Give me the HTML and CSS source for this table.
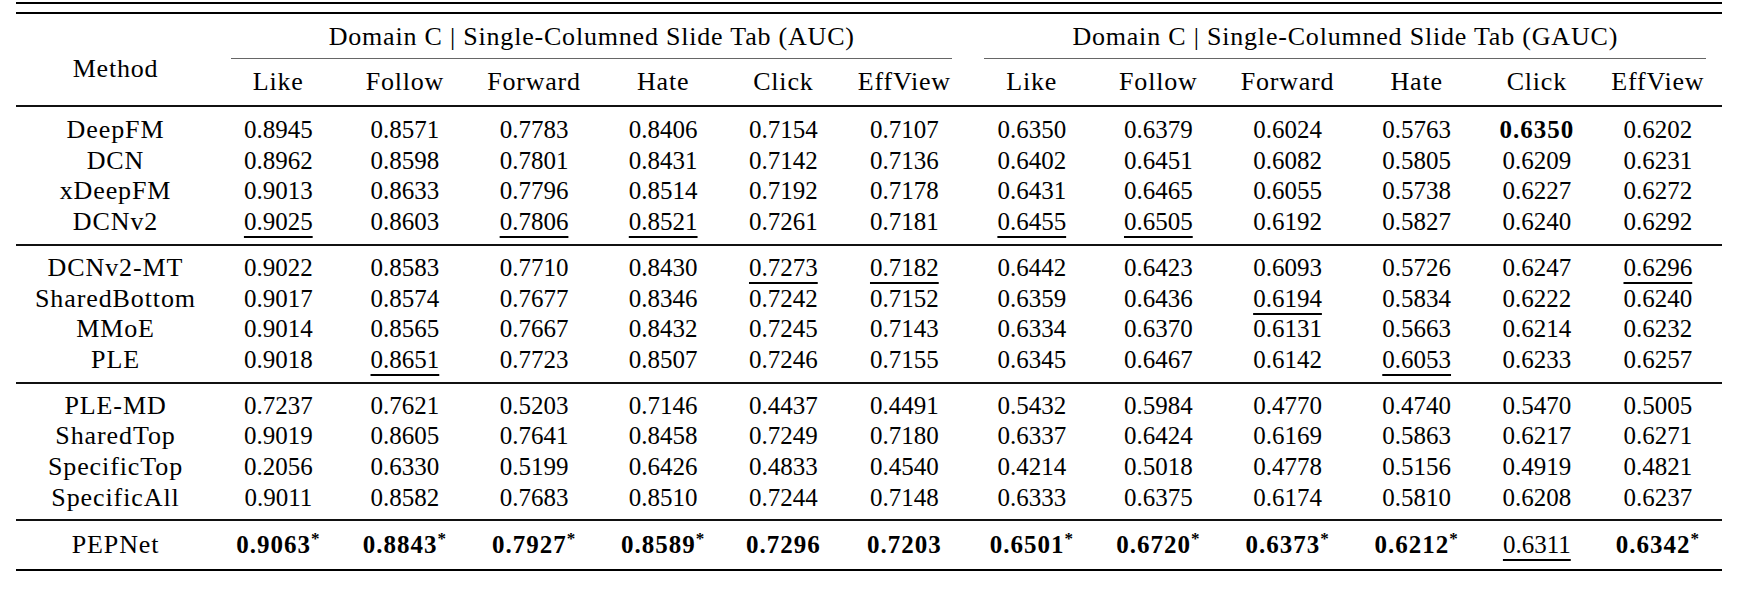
FILE: index.html
```html
<!DOCTYPE html>
<html>
<head>
<meta charset="utf-8">
<link rel="stylesheet" href="styles.css">
</head>
<body>
<div class="page">
  <div class="wrap">
    <div class="double"></div>
    <table class="results">
      <colgroup>
        <col class="c-method">
        <col class="c-n"><col class="c-n"><col class="c-w"><col class="c-n"><col class="c-s"><col class="c-e">
        <col class="c-n"><col class="c-n"><col class="c-w"><col class="c-n"><col class="c-s"><col class="c-e">
      </colgroup>
      <thead>
        <tr>
          <th class="method" rowspan="2">Method</th>
          <th class="group" colspan="6"><div class="gtitle">Domain C | Single-Columned Slide Tab (AUC)</div><div class="cmid"></div></th>
          <th class="group" colspan="6"><div class="gtitle">Domain C | Single-Columned Slide Tab (GAUC)</div><div class="cmid"></div></th>
        </tr>
        <tr class="subs">
          <th>Like</th><th>Follow</th><th>Forward</th><th>Hate</th><th>Click</th><th>EffView</th>
          <th>Like</th><th>Follow</th><th>Forward</th><th>Hate</th><th>Click</th><th>EffView</th>
        </tr>
      </thead>
      <tbody>
        <tr class="first">
          <td class="name">DeepFM</td>
          <td>0.8945</td><td>0.8571</td><td>0.7783</td><td>0.8406</td><td>0.7154</td><td>0.7107</td>
          <td>0.6350</td><td>0.6379</td><td>0.6024</td><td>0.5763</td><td><b>0.6350</b></td><td>0.6202</td>
        </tr>
        <tr>
          <td class="name">DCN</td>
          <td>0.8962</td><td>0.8598</td><td>0.7801</td><td>0.8431</td><td>0.7142</td><td>0.7136</td>
          <td>0.6402</td><td>0.6451</td><td>0.6082</td><td>0.5805</td><td>0.6209</td><td>0.6231</td>
        </tr>
        <tr>
          <td class="name">xDeepFM</td>
          <td>0.9013</td><td>0.8633</td><td>0.7796</td><td>0.8514</td><td>0.7192</td><td>0.7178</td>
          <td>0.6431</td><td>0.6465</td><td>0.6055</td><td>0.5738</td><td>0.6227</td><td>0.6272</td>
        </tr>
        <tr class="last">
          <td class="name">DCNv2</td>
          <td><span class="u">0.9025</span></td><td>0.8603</td><td><span class="u">0.7806</span></td><td><span class="u">0.8521</span></td><td>0.7261</td><td>0.7181</td>
          <td><span class="u">0.6455</span></td><td><span class="u">0.6505</span></td><td>0.6192</td><td>0.5827</td><td>0.6240</td><td>0.6292</td>
        </tr>
        <tr class="first sep">
          <td class="name">DCNv2-MT</td>
          <td>0.9022</td><td>0.8583</td><td>0.7710</td><td>0.8430</td><td><span class="u">0.7273</span></td><td><span class="u">0.7182</span></td>
          <td>0.6442</td><td>0.6423</td><td>0.6093</td><td>0.5726</td><td>0.6247</td><td><span class="u">0.6296</span></td>
        </tr>
        <tr>
          <td class="name">SharedBottom</td>
          <td>0.9017</td><td>0.8574</td><td>0.7677</td><td>0.8346</td><td>0.7242</td><td>0.7152</td>
          <td>0.6359</td><td>0.6436</td><td><span class="u">0.6194</span></td><td>0.5834</td><td>0.6222</td><td>0.6240</td>
        </tr>
        <tr>
          <td class="name">MMoE</td>
          <td>0.9014</td><td>0.8565</td><td>0.7667</td><td>0.8432</td><td>0.7245</td><td>0.7143</td>
          <td>0.6334</td><td>0.6370</td><td>0.6131</td><td>0.5663</td><td>0.6214</td><td>0.6232</td>
        </tr>
        <tr class="last">
          <td class="name">PLE</td>
          <td>0.9018</td><td><span class="u">0.8651</span></td><td>0.7723</td><td>0.8507</td><td>0.7246</td><td>0.7155</td>
          <td>0.6345</td><td>0.6467</td><td>0.6142</td><td><span class="u">0.6053</span></td><td>0.6233</td><td>0.6257</td>
        </tr>
        <tr class="first sep">
          <td class="name">PLE-MD</td>
          <td>0.7237</td><td>0.7621</td><td>0.5203</td><td>0.7146</td><td>0.4437</td><td>0.4491</td>
          <td>0.5432</td><td>0.5984</td><td>0.4770</td><td>0.4740</td><td>0.5470</td><td>0.5005</td>
        </tr>
        <tr>
          <td class="name">SharedTop</td>
          <td>0.9019</td><td>0.8605</td><td>0.7641</td><td>0.8458</td><td>0.7249</td><td>0.7180</td>
          <td>0.6337</td><td>0.6424</td><td>0.6169</td><td>0.5863</td><td>0.6217</td><td>0.6271</td>
        </tr>
        <tr>
          <td class="name">SpecificTop</td>
          <td>0.2056</td><td>0.6330</td><td>0.5199</td><td>0.6426</td><td>0.4833</td><td>0.4540</td>
          <td>0.4214</td><td>0.5018</td><td>0.4778</td><td>0.5156</td><td>0.4919</td><td>0.4821</td>
        </tr>
        <tr class="last">
          <td class="name">SpecificAll</td>
          <td>0.9011</td><td>0.8582</td><td>0.7683</td><td>0.8510</td><td>0.7244</td><td>0.7148</td>
          <td>0.6333</td><td>0.6375</td><td>0.6174</td><td>0.5810</td><td>0.6208</td><td>0.6237</td>
        </tr>
        <tr class="sep final">
          <td class="name">PEPNet</td>
          <td><b>0.9063<sup>*</sup></b></td><td><b>0.8843<sup>*</sup></b></td><td><b>0.7927<sup>*</sup></b></td><td><b>0.8589<sup>*</sup></b></td><td><b>0.7296</b></td><td><b>0.7203</b></td>
          <td><b>0.6501<sup>*</sup></b></td><td><b>0.6720<sup>*</sup></b></td><td><b>0.6373<sup>*</sup></b></td><td><b>0.6212<sup>*</sup></b></td><td><span class="u">0.6311</span></td><td><b>0.6342<sup>*</sup></b></td>
        </tr>
      </tbody>
    </table>
  </div>
</div>
</body>
</html>
```

FILE: styles.css
```css
html, body {
  margin: 0;
  padding: 0;
  background: #ffffff;
}

body {
  font-family: "Liberation Serif", "Times New Roman", serif;
  color: #000000;
}

.page {
  padding: 2px 0 0 16px;
}

.wrap {
  width: 1706px;
}

.double {
  height: 8px;
  border-top: 2px solid #000;
  border-bottom: 2px solid #000;
}

.results {
  width: 1706px;
  table-layout: fixed;
  border-collapse: separate;
  border-spacing: 0;
}

.c-method { width: 199px; }
.c-n { width: 126.6px; }
.c-w { width: 131.7px; }
.c-s { width: 113.8px; }
.c-e { width: 128.2px; }

.results th,
.results td {
  padding: 0;
  text-align: center;
  white-space: nowrap;
  font-weight: normal;
}

.results th {
  font-size: 26px;
  letter-spacing: 0.8px;
  line-height: 30px;
}

.results th.method {
  vertical-align: top;
  padding-top: 40px;
  border-bottom: 2px solid #111;
}

.results th.group {
  vertical-align: top;
  padding-top: 8px;
}

.gtitle {
  line-height: 30px;
}

.cmid {
  margin: 6px 16px 0 16px;
  border-top: 1px solid #666;
}

.subs th {
  padding-top: 8px;
  padding-bottom: 8px;
  border-bottom: 2px solid #111;
}

.results td {
  font-size: 25px;
  line-height: 30.7px;
}

.results td.name {
  font-size: 26px;
  letter-spacing: 0.9px;
}

.results tr.first > td {
  padding-top: 8px;
}

.results tr.sep > td {
  border-top: 2px solid #111;
  padding-top: 7px;
}

.results tr.last > td {
  padding-bottom: 6px;
}

.results tr.final > td {
  padding-top: 9px;
  padding-bottom: 8px;
  border-bottom: 2px solid #000;
}

.results b {
  font-weight: bold;
  letter-spacing: 1px;
}

.results sup {
  font-size: 17px;
  line-height: 0;
  vertical-align: 9px;
  margin-left: 0;
}

.u {
  text-decoration: underline;
  text-decoration-thickness: 1.5px;
  text-underline-offset: 6px;
}
```
